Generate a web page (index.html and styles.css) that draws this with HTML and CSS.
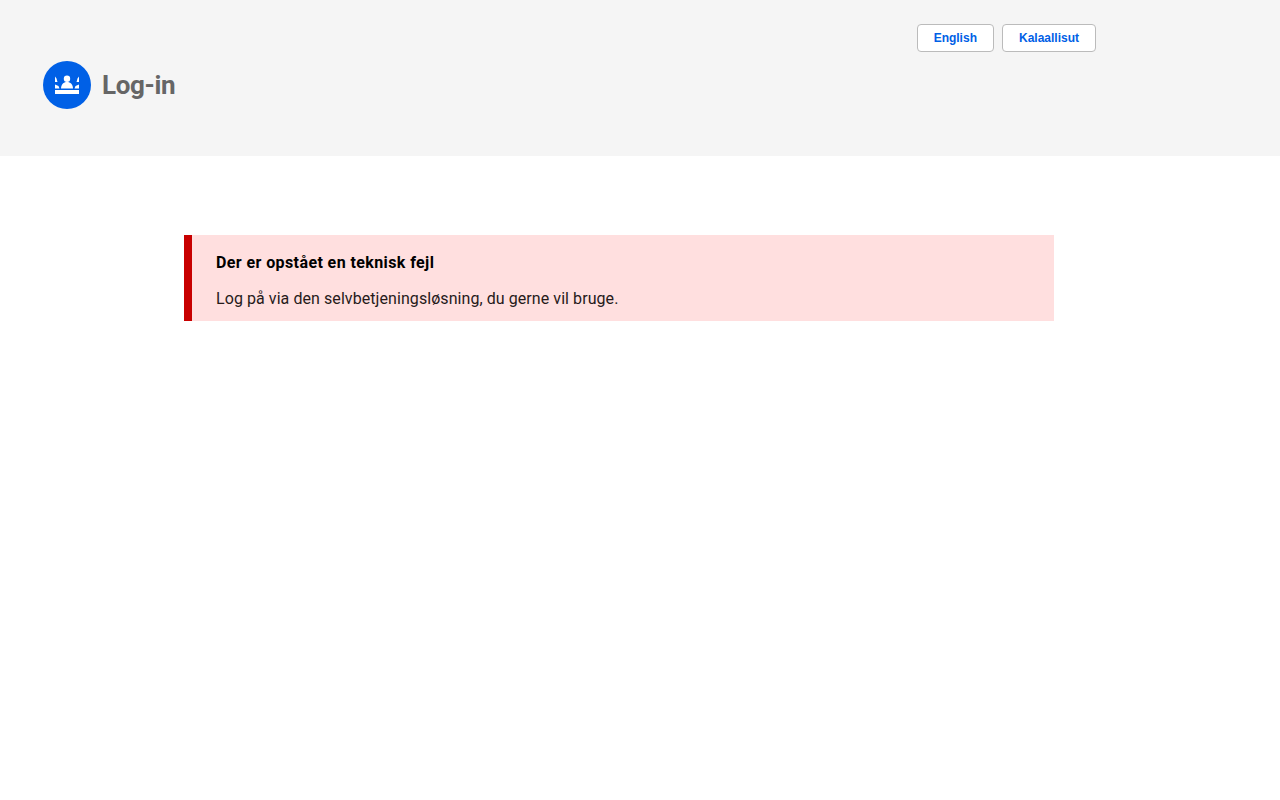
FILE: index.html
```html
<!DOCTYPE html>
<html lang="da">
<head>
<meta charset="utf-8">
<title>Log-in</title>
<link rel="stylesheet" href="styles.css">
</head>
<body>
<header class="header">
  <nav class="langs">
    <a class="lang" href="#">English</a>
    <a class="lang" href="#">Kalaallisut</a>
  </nav>
  <div class="brand">
    <svg class="logo" width="48" height="48" viewBox="0 0 48 48">
      <circle cx="24" cy="24" r="24" fill="#0060e6"/>
      <circle cx="24" cy="17.800" r="3.200" fill="#fff"/>
      <path d="M18 27.500c0-3.800 2.500-6.500 6-6.500s6 2.700 6 6.500z" fill="#fff"/>
      <path d="M12 15.500l1.500 2 1 3.500H12zM36 15.500l-1.500 2-1 3.500H36zM12 23.500l3.500 1.500 1 2.500H12zM36 23.500l-3.500 1.500-1 2.500H36z" fill="#fff"/>
      <rect x="12" y="29" width="24" height="4" fill="#fff"/>
    </svg>
    <span class="title">Log-in</span>
  </div>
</header>
<main class="main">
  <section class="alert">
    <h1 class="alert-title">Der er opstået en teknisk fejl</h1>
    <p class="alert-text">Log på via den selvbetjeningsløsning, du gerne vil bruge.</p>
  </section>
</main>
</body>
</html>
```
FILE: styles.css
```css
* { box-sizing: border-box; }
html, body { margin: 0; padding: 0; background: #fff; }
body { font-family: Roboto, "Noto Sans", sans-serif; }
.header { height: 156px; background: #f5f5f5; padding: 24px 184px 0 43px; }
.langs { display: flex; justify-content: flex-end; gap: 8px; height: 28px; }
.lang {
  display: flex; align-items: center; justify-content: center;
  height: 28px; padding: 0 16px; background: #fff;
  border: 1px solid #bbb; border-radius: 4px;
  font: bold 12px "Liberation Sans", Arial, sans-serif;
  color: #0060e6; text-decoration: none;
}
.brand { display: flex; align-items: center; gap: 11px; margin-top: 9px; }
.logo { display: block; flex: none; }
.title { font-size: 26px; font-weight: 700; color: #666; line-height: 48px; letter-spacing: -0.35px; }
.main { padding: 79px 0 0 184px; }
.alert { width: 870px; height: 86px; background: #ffdfdf; border-left: 8px solid #c80000; padding: 16px 24px 0; }
.alert-title { margin: 0; font-size: 16px; line-height: 24px; font-weight: 700; color: #000; letter-spacing: 0.4px; }
.alert-text { margin: 12px 0 0; font-size: 16px; line-height: 24px; color: #261a1a; letter-spacing: 0.07px; }
```
